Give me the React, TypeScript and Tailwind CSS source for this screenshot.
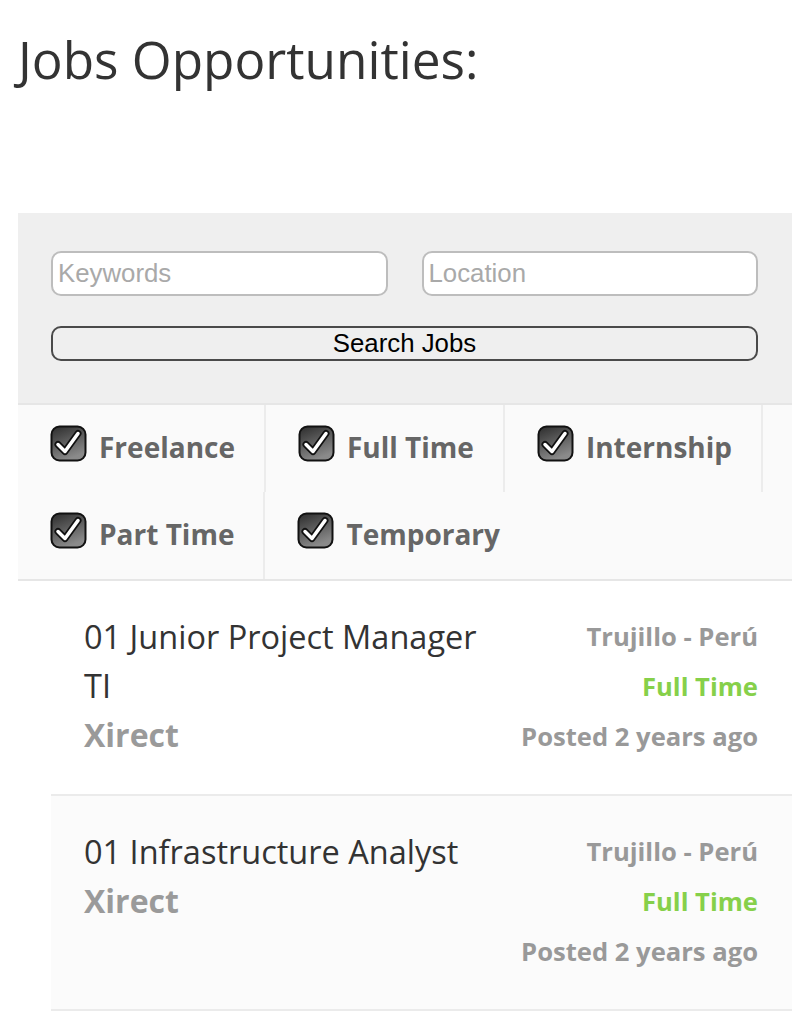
import React from 'react';

const filters = ['Freelance', 'Full Time', 'Internship', 'Part Time', 'Temporary'];

const jobs = [
  { title: '01 Junior Project Manager TI', company: 'Xirect', location: 'Trujillo - Perú', type: 'Full Time', posted: 'Posted 2 years ago' },
  { title: '01 Infrastructure Analyst', company: 'Xirect', location: 'Trujillo - Perú', type: 'Full Time', posted: 'Posted 2 years ago' },
];

function CheckBox() {
  return (
    <svg width="37" height="37" viewBox="0 0 37 37" className="shrink-0">
      <defs>
        <linearGradient id="cbg" x1="0" y1="0" x2="0.4" y2="1">
          <stop offset="0" stopColor="#2b2b2b" />
          <stop offset="1" stopColor="#8a8a8a" />
        </linearGradient>
      </defs>
      <rect x="1.5" y="1.5" width="34" height="34" rx="8" fill="url(#cbg)" stroke="#111" strokeWidth="2" />
      <path d="M8 19.5 L15 26.5 L28 8.5" fill="none" stroke="#111" strokeWidth="7" strokeLinecap="round" strokeLinejoin="round" />
      <path d="M8 19.5 L15 26.5 L28 8.5" fill="none" stroke="#fff" strokeWidth="3.5" strokeLinecap="round" strokeLinejoin="round" />
    </svg>
  );
}

export default function App() {
  return (
    <div className="min-h-[1024px] bg-white pt-[24px] pl-[18px] pr-[13px]" style={{ fontFamily: '"Open Sans", sans-serif' }}>
      <h1 className="text-[51.3px] leading-[71px] text-[#333] font-normal">Jobs Opportunities:</h1>

      {/* search panel */}
      <div className="mt-[118px] bg-[#efefef] pt-[38px] pb-[42px] pl-[33px] pr-[34px]" style={{ fontFamily: '"Liberation Sans", Arial, sans-serif' }}>
        <div className="flex gap-[34px]">
          <input
            placeholder="Keywords"
            className="flex-1 min-w-0 h-[45px] rounded-[10px] border-2 border-[#bdbdbd] bg-white px-[5px] text-[25.8px] text-[#333] placeholder:text-[#a9a9a9] outline-none"
          />
          <input
            placeholder="Location"
            className="flex-1 min-w-0 h-[45px] rounded-[10px] border-2 border-[#bdbdbd] bg-white px-[5px] text-[25.8px] text-[#333] placeholder:text-[#a9a9a9] outline-none"
          />
        </div>
        <button className="mt-[30px] w-full h-[35px] rounded-[10px] border-2 border-[#4a4a4a] bg-[#efefef] text-[25.8px] leading-none text-black">
          Search Jobs
        </button>
      </div>

      {/* job type filters */}
      <div className="flex flex-wrap bg-[#fafafa] border-t-2 border-b-2 border-[#e6e6e6]">
        {filters.map((f, i) => (
          <label
            key={f}
            className={`flex h-[87px] items-center gap-[12px] pl-[32px] pr-[29px] ${i < filters.length - 1 ? 'border-r-2 border-[#ececec]' : ''}`}
          >
            <span className="mb-[10px]">
              <CheckBox />
            </span>
            <span className="mb-[3px] text-[28px] leading-[38px] font-bold text-[#666]">{f}</span>
          </label>
        ))}
      </div>

      {/* job list */}
      <ul className="ml-[33px]">
        {jobs.map((job, i) => (
          <li
            key={i}
            className={`flex justify-between border-b-2 border-[#ebebeb] pt-[31px] pb-[32px] pl-[33px] pr-[34px] ${i % 2 === 1 ? 'bg-[#fbfbfb]' : 'bg-white'}`}
          >
            <div className="w-[400px]">
              <div className="text-[32.5px] leading-[49px] text-[#333]">{job.title}</div>
              <div className="text-[32px] leading-[49px] font-bold text-[#9a9a9a]">{job.company}</div>
            </div>
            <div className="text-right text-[25.6px] leading-[50px] font-bold">
              <div className="text-[#999]">{job.location}</div>
              <div className="text-[#86d04a]">{job.type}</div>
              <div className="text-[#999]">{job.posted}</div>
            </div>
          </li>
        ))}
      </ul>
    </div>
  );
}
